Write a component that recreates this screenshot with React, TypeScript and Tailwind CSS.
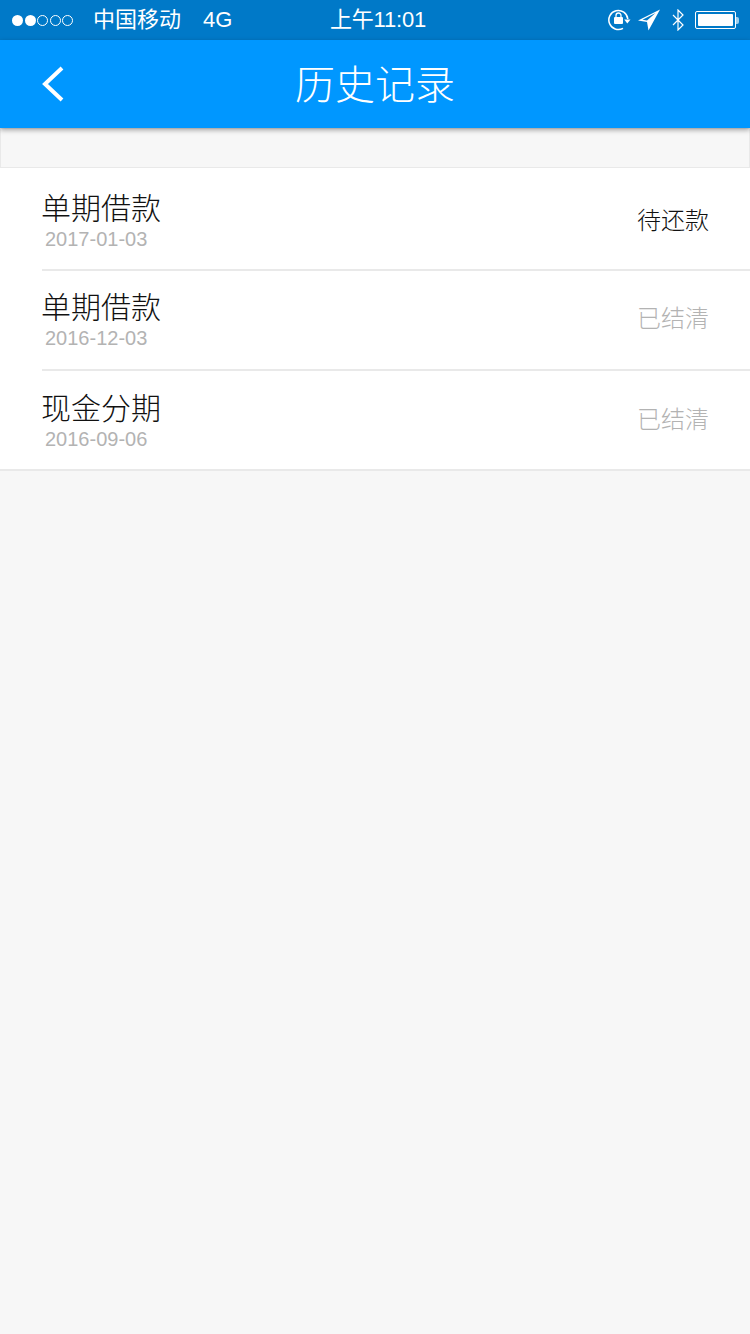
import React from 'react';

type RecordItem = {
  id: string;
  title: string;
  date: string;
  status: string;
  pending?: boolean;
};

const records: RecordItem[] = [
  { id: 'a', title: '单期借款', date: '2017-01-03', status: '待还款', pending: true },
  { id: 'b', title: '单期借款', date: '2016-12-03', status: '已结清' },
  { id: 'c', title: '现金分期', date: '2016-09-06', status: '已结清' },
];

const cjk = "font-['Liberation_Sans','Noto_Sans_CJK_SC',sans-serif]";

function SignalDots() {
  return (
    <div className="flex items-center gap-[1.5px]">
      {[0, 1, 2, 3, 4].map((i) => (
        <span
          key={i}
          className={i < 2 ? 'h-[11px] w-[11px] rounded-full bg-white' : 'h-[11px] w-[11px] rounded-full border border-white'}
        />
      ))}
    </div>
  );
}

function StatusIcons() {
  return (
    <div className="flex items-center">
      <svg width="23" height="22" viewBox="0 0 23 22" fill="none">
        <path d="M15 19.3A9.5 9.5 0 1 1 19.8 10" stroke="white" strokeWidth="1.5" />
        <path d="M16.2 10.5h6.3l-3.2 4z" fill="white" />
        <rect x="6" y="8" width="9" height="7" rx="1" fill="white" />
        <path d="M8 8V6.5a2.5 2.5 0 0 1 5 0V8" stroke="white" strokeWidth="1.3" />
      </svg>
      <svg className="ml-[6px]" width="23" height="23" viewBox="0 0 23 23">
        <path d="M23 .5 1 11.5l9 1.5 1.5 8.5z M18.5 4 10 11.5 5.5 10.8z" fill="white" fillRule="evenodd" />
      </svg>
      <svg className="ml-[12px]" width="13" height="22" viewBox="0 0 13 22" fill="none">
        <path d="M1 6l10 10-5 5V1l5 5L1 16" stroke="white" strokeWidth="1.2" />
      </svg>
      <div className="ml-[10px] flex items-center">
        <div className="h-[18px] w-[41px] rounded-[2px] border border-white p-[2px]">
          <div className="h-full w-full rounded-[1px] bg-white" />
        </div>
        <div className="h-[7px] w-[3px] rounded-r-[2px] bg-[#9fd0ef]" />
      </div>
    </div>
  );
}

function RecordRow({ item, last }: { item: RecordItem; last: boolean }) {
  const height = item.pending ? 'h-[103px] pt-[5px]' : last ? 'h-[98px] pt-[2px]' : 'h-[100px]';
  return (
    <div className="pl-[42px]">
      <div className={`flex ${height} items-center justify-between pr-[41px] ${last ? '' : 'border-b-2 border-[#e9e9e9]'}`}>
        <div className="flex flex-col">
          <span className="-ml-[1px] text-[30px] leading-[36px] font-light text-[#111111]">{item.title}</span>
          <span className="pl-[3px] font-['Liberation_Sans',sans-serif] text-[20px] leading-[24px] text-[#b3b3b3]">{item.date}</span>
        </div>
        <span className={item.pending ? 'text-[24px] leading-[30px] font-light text-[#111111]' : 'mb-[2px] text-[24px] leading-[30px] font-light text-[#b3b3b3]'}>
          {item.status}
        </span>
      </div>
    </div>
  );
}

export default function App(): JSX.Element {
  return (
    <div className={`flex min-h-[1334px] w-[750px] flex-col bg-[#f7f7f7] ${cjk}`}>
      <div className="flex h-[40px] items-center justify-between bg-[#0079c8] pr-[11px] pl-[12px] text-white">
        <div className="flex items-center">
          <SignalDots />
          <span className="ml-[20px] text-[22px] leading-[26px]">中国移动</span>
          <span className="ml-[22px] text-[22px] leading-[26px]">4G</span>
        </div>
        <span className="absolute left-[330px] text-[22px] leading-[26px] tracking-[-0.2px]">上午11:01</span>
        <StatusIcons />
      </div>

      <div className="relative z-10 flex h-[88px] items-center justify-center bg-[#0097ff] pt-[2px] shadow-[0_2px_5px_rgba(0,0,0,0.35)]">
        <svg className="absolute top-[26px] left-[42px]" width="22" height="36" viewBox="0 0 22 36" fill="none">
          <path d="M20 2 3 18l17 16" stroke="white" strokeWidth="4" />
        </svg>
        <h1 className="text-[40px] leading-[48px] font-light text-white">历史记录</h1>
      </div>

      <div className="h-[40px] border border-[#e9e9e9] bg-[#f7f7f7]" />

      <div className="border-b-2 border-[#e9e9e9] bg-white">
        {records.map((item, i) => (
          <RecordRow key={item.id} item={item} last={i === records.length - 1} />
        ))}
      </div>
    </div>
  );
}
